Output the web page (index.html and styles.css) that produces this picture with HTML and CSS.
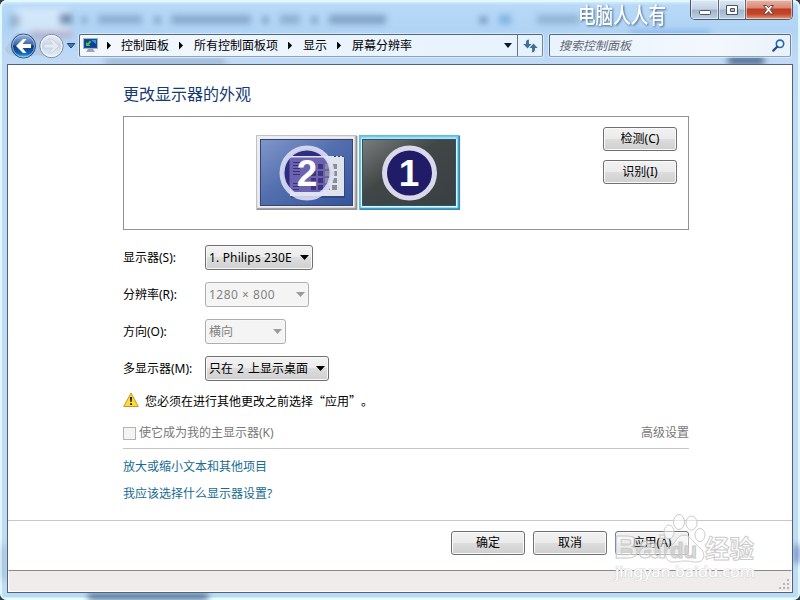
FILE: index.html
```html
<!DOCTYPE html>
<html lang="zh-CN">
<head>
    <meta charset="UTF-8">
    <meta name="viewport" content="width=device-width, initial-scale=1.0">
    <title>屏幕分辨率</title>
    <link rel="stylesheet" href="styles.css">
</head>
<body>

<div class="window">
    <!-- Aero glass: blurred shapes behind the frame -->
    <svg class="glass" width="800" height="600" viewBox="0 0 800 600">
        <rect x="15" y="8" width="55" height="24" fill="#fff" opacity=".4"/>
        <g fill="#17365f">
            <rect x="10" y="15" width="10" height="12" opacity=".25"/>
            <rect x="60" y="14" width="12" height="10" opacity=".5"/>
            <rect x="82" y="17" width="5" height="6" opacity=".4"/>
            <rect x="98" y="15" width="44" height="9" opacity=".25"/>
            <rect x="155" y="17" width="5" height="6" opacity=".5"/>
            <rect x="171" y="15" width="80" height="9" opacity=".28"/>
            <rect x="263" y="17" width="5" height="6" opacity=".5"/>
            <rect x="280" y="15" width="20" height="9" opacity=".25"/>
            <rect x="312" y="17" width="5" height="6" opacity=".5"/>
            <rect x="329" y="15" width="57" height="9" opacity=".33"/>
            <rect x="480" y="17" width="7" height="6" opacity=".5"/>
            <rect x="499" y="15" width="12" height="9" fill="#2a78b8" opacity=".4"/>
            <rect x="537" y="15" width="42" height="9" opacity=".22"/>
            <rect x="105" y="60" width="120" height="4" opacity=".35"/>
            <rect x="630" y="30" width="80" height="8" fill="#3f8be0" opacity=".35"/>
            <rect x="728" y="56" width="36" height="9" opacity=".65"/>
            <rect x="88" y="594" width="120" height="9" opacity=".75"/>
            <rect x="794" y="545" width="6" height="18" fill="#3a50a0" opacity=".6"/>
            <rect x="1" y="545" width="5" height="35" opacity=".2"/>
        </g>
        <rect x="30" y="31" width="42" height="7" fill="#b46a80" opacity=".35"/>
    </svg>

    <div class="caption">
        <svg class="channel" width="92" height="29" viewBox="0 0 92 29">
            <text x="1" y="23" textLength="88" lengthAdjust="spacingAndGlyphs">电脑人人有</text>
        </svg>
        <div class="controls">
            <span class="ctl min"><svg width="27" height="19"><rect x="8.500" y="10.500" width="11" height="4" rx="1" fill="#fff" stroke="#4a5666"/></svg></span>
            <span class="ctl max"><svg width="26" height="19"><path d="M7.500 5.500h11v9h-11zM11.500 8.500v3h4v-3z" fill="#fff" fill-rule="evenodd" stroke="#4a5666"/></svg></span>
            <span class="ctl close"><svg width="46" height="19"><path d="M17.500 5.500h3l2 2.200 2-2.200h3l-3.300 4 3.300 4.500h-3l-2-2.500-2 2.500h-3l3.300-4.500z" fill="#fff" stroke="#64404a"/></svg></span>
        </div>
    </div>

    <div class="navbar">
        <svg class="travel" width="66" height="32" viewBox="0 0 66 32">
            <defs>
                <linearGradient id="back" x1="0" y1="0" x2="0" y2="1">
                    <stop offset="0" stop-color="#a5bde0"/>
                    <stop offset=".45" stop-color="#3465ab"/>
                    <stop offset=".5" stop-color="#0c3a80"/>
                    <stop offset=".8" stop-color="#1261b0"/>
                    <stop offset="1" stop-color="#53d2f7"/>
                </linearGradient>
                <linearGradient id="fwd" x1="0" y1="0" x2="0" y2="1">
                    <stop offset="0" stop-color="#e8eef7"/>
                    <stop offset=".5" stop-color="#c9d6e6"/>
                    <stop offset="1" stop-color="#e9f2fb"/>
                </linearGradient>
            </defs>
            <path d="M16 4c12 0 10 3 21 2 7-1 15-1 18 2v16c-4 5-10 4-17 2-10 3-30 4-33-6z" fill="#a9bad4" opacity=".45"/>
            <circle cx="23.500" cy="17" r="12" fill="url(#back)" stroke="#314e7c"/>
            <circle cx="23.500" cy="17" r="11" fill="none" stroke="#c8d9ef" stroke-opacity=".65"/>
            <path d="M16 17l7-7h3.500l-4 5H31v4h-8.500l4 5H23z" fill="#fff"/>
            <circle cx="51.500" cy="17" r="11.700" fill="url(#fwd)" stroke="#7c8ca4"/>
            <circle cx="51.500" cy="17" r="10.500" fill="none" stroke="#f4f8fc"/>
            <path d="M59 17l-7-7h-3.500l4 5H44v4h8.500l-4 5H52z" fill="#e4eaf2" stroke="#c1ccdb" stroke-width=".7"/>
        </svg>
        <svg class="history" width="10" height="32"><path d="M1.300 14.500h7.500l-3.800 4.500z" fill="#3e7dbb" stroke="#24456e"/></svg>
        <div class="address">
            <svg class="place" width="16" height="16" viewBox="0 0 16 16">
                <rect x=".5" y="1.500" width="14" height="10" fill="#174c9b" stroke="#a9b3c4"/>
                <rect x="2" y="3" width="11" height="7" fill="#123e91"/>
                <path d="M8 3h5v4z" fill="#2d9adf"/>
                <path d="M3 9V5l1.500 1.300L7 3.500 8.300 5 6 7.500 7.500 9z" fill="#45c653"/>
                <path d="M5 12h5l2 3H3z" fill="#9ba5b8"/>
            </svg>
            <span class="sep"></span><span class="crumb">控制面板</span>
            <span class="sep"></span><span class="crumb">所有控制面板项</span>
            <span class="sep"></span><span class="crumb">显示</span>
            <span class="sep"></span><span class="crumb">屏幕分辨率</span>
            <span class="arrow"></span>
            <span class="refresh">
                <svg width="15" height="14" viewBox="0 0 15 14"><path d="M6.500 .500C2.500 .500 3 3.500 3 5H.300l4.200 4.500L8.500 5H6C6 3 5.500 1.500 6.500 .500zM8.500 13.500c4 0 3.500-3 3.500-4.500h2.700L10.500 4.500 6.500 9H9c0 2 .5 3.500-.5 4.500z" fill="#3f7098"/></svg>
            </span>
        </div>
        <div class="search">
            <span>搜索控制面板</span>
            <svg width="13" height="13" viewBox="0 0 13 13"><circle cx="8" cy="4.800" r="3.700" fill="#e9f7ff" stroke="#2a62ae" stroke-width="1.600"/><path d="M5.200 7.700L1.300 11.600" stroke="#254a86" stroke-width="2.200" stroke-linecap="round"/></svg>
        </div>
    </div>

    <div class="client">
        <div class="page">
            <h1>更改显示器的外观</h1>

            <div class="preview">
                <svg class="monitors" width="206" height="78" viewBox="0 0 206 78">
                    <defs>
                        <linearGradient id="screen2" x1="0" y1="0" x2="1" y2="1">
                            <stop offset="0" stop-color="#8197cb"/>
                            <stop offset=".45" stop-color="#536fae"/>
                            <stop offset="1" stop-color="#36549a"/>
                        </linearGradient>
                        <linearGradient id="screen1" x1="0" y1="0" x2="1" y2="1">
                            <stop offset="0" stop-color="#7a7d7e"/>
                            <stop offset=".42" stop-color="#414647"/>
                            <stop offset="1" stop-color="#3a4042"/>
                        </linearGradient>
                        <linearGradient id="bezel" x1="0" y1="0" x2="1" y2="1">
                            <stop offset="0" stop-color="#f0f0f2"/>
                            <stop offset="1" stop-color="#b8b8bc"/>
                        </linearGradient>
                    </defs>
                    <!-- monitor 2 -->
                    <rect x="1" y="1" width="101" height="75" fill="url(#bezel)"/>
                    <path d="M1.500 76V1.500H101" fill="none" stroke="#c2c2c5"/>
                    <path d="M2 75.200h99.500V2" fill="none" stroke="#939397" stroke-width="1.800"/>
                    <rect x="3.500" y="3.500" width="95" height="69" fill="none" stroke="#eeeef2" stroke-width="2"/>
                    <rect x="5.500" y="5.500" width="92" height="66" fill="url(#screen2)" stroke="#36456f"/>
                    <rect x="36" y="24" width="54" height="40" fill="#263a70" opacity=".6"/>
                    <circle cx="52" cy="39" r="24" fill="#211b70" opacity=".8"/>
                    <rect x="35" y="22" width="54" height="40" fill="#e0e3ed"/>
                    <path d="M79 22.500h2m2 0h2m2 0h2" stroke="#334572"/>
                    <path d="M34.500 23.500H70a23 23 0 0 1-3 34.500H38a23 23 0 0 1-3.500-4.500z" fill="#6c62b0"/>
                    <path d="M38 28.500h7m-7 3h7m-7 3h7m-7 3h7m-7 3h7m-7 9h6m-6 3h6m-6 3h6" stroke="#38306f"/>
                    <path d="M56 30h5v5h-5zm7 0h5v5h-5zM56 37h5v5h-5zm7 0h5v5h-5zM56 44h5v5h-5zm7 0h5v5h-5zM56 51h5v5h-5zm7 0h5v5h-5z" fill="#3c3580"/>
                    <path d="M70 30h5v5h-5zm7 0h5v5h-5zM70 37h5v5h-5zm7 0h5v5h-5zM70 44h5v5h-5zm7 0h5v5h-5zM70 51h5v5h-5zm7 0h5v5h-5z" fill="#8b8d98"/>
                    <circle cx="52" cy="39" r="25" fill="none" stroke="#dfe1f7" stroke-width="5" stroke-opacity=".88"/>
                    <text class="num" x="52" y="52">2</text>
                    <!-- monitor 1 (selected) -->
                    <rect x="104" y="1" width="101" height="75" fill="#83d3f4"/>
                    <path d="M104.800 76V1.800H204" fill="none" stroke="#65b9dd" stroke-width="1.600"/>
                    <path d="M105 75.200h99.200V2" fill="none" stroke="#3589b5" stroke-width="1.800"/>
                    <path d="M107 5v68m0-.700h94V5" fill="none" stroke="#d9f7ff" stroke-width="2"/>
                    <path d="M106 4.500h95" stroke="#a6e6fc" stroke-width="2"/>
                    <rect x="107.500" y="5.500" width="93" height="66" fill="url(#screen1)" stroke="#315362"/>
                    <circle cx="154.500" cy="39" r="25" fill="#211c68" stroke="#dad9ea" stroke-width="5"/>
                    <text class="num" x="154" y="52">1</text>
                </svg>
                <div class="side">
                    <button type="button">检测(C)</button>
                    <button type="button">识别(I)</button>
                </div>
            </div>

            <div class="row"><label>显示器(S):</label><div class="combo w108"><span class="model">1. Philips 230E</span></div></div>
            <div class="row"><label>分辨率(R):</label><div class="combo w104 off"><span class="size">1280 × 800</span></div></div>
            <div class="row"><label>方向(O):</label><div class="combo w81 off"><span>横向</span></div></div>
            <div class="row"><label>多显示器(M):</label><div class="combo w124"><span class="mode">只在 2 上显示桌面</span></div></div>

            <div class="notice">
                <svg width="16" height="16" viewBox="0 0 16 16"><path d="M8 1L15.300 14.500H.700z" fill="#ffd83a" stroke="#c79a1c" stroke-linejoin="round"/><path d="M7 5h2l-.4 5H7.400zM7.200 11.200h1.700v1.700H7.200z" fill="#111"/></svg>
                <span>您必须在进行其他更改之前选择“应用”。</span>
            </div>

            <div class="primary">
                <span class="check"></span><span>使它成为我的主显示器(K)</span>
                <span class="advanced">高级设置</span>
            </div>

            <a class="link">放大或缩小文本和其他项目</a>
            <a class="link">我应该选择什么显示器设置?</a>
        </div>

        <div class="actions">
            <button type="button">确定</button>
            <button type="button">取消</button>
            <button type="button">应用(A)</button>
        </div>
        <div class="status">
            <svg width="12" height="12"><path d="M8 1h2v2H8zM4 5h2v2H4zM8 5h2v2H8zM0 9h2v2H0zM4 9h2v2H4zM8 9h2v2H8z" fill="#b9b6b8"/></svg>
        </div>
    </div>

    <svg class="watermark" width="150" height="76" viewBox="0 0 150 76">
        <g fill="#fff" fill-opacity=".5" stroke="#cbcbcb" stroke-width="1">
            <ellipse cx="68" cy="12" rx="5.500" ry="7.500"/>
            <ellipse cx="80.500" cy="13" rx="5.500" ry="7"/>
            <ellipse cx="58" cy="22" rx="5" ry="7"/>
            <ellipse cx="89" cy="25" rx="5" ry="6.500"/>
            <path d="M73 25c-7 0-8 8-14 12-7 5-5 15 3 15 6 0 7-1 12-1s6 1 12 1c8 0 9-9 3-14-7-5-9-13-16-13z"/>
            <text class="logo" x="3" y="48" textLength="53" lengthAdjust="spacingAndGlyphs">Bai</text>
            <text class="logo-du" x="59" y="48" textLength="27" lengthAdjust="spacingAndGlyphs">du</text>
            <text class="logo-cn" x="94" y="48" textLength="49" lengthAdjust="spacingAndGlyphs">经验</text>
        </g>
        <text class="site" x="4" y="67" textLength="140" lengthAdjust="spacingAndGlyphs">jingyan.baidu.com</text>
    </svg>
</div>

</body>
</html>
```
FILE: styles.css
```css
* {
    box-sizing: border-box;
}

body {
    margin: 0;
    background: #333b48;
    font-family: "Noto Sans", "Noto Sans CJK SC", sans-serif;
    font-size: 12px;
    line-height: 16px;
    color: #000;
}

svg {
    display: block;
    flex: none;
}

.window {
    position: relative;
    display: flex;
    flex-direction: column;
    width: 800px;
    height: 600px;
    padding: 0 7px 7px;
    overflow: hidden;
    border-radius: 7px;
    background: linear-gradient(#e5f8ff 0, #b8d9f7 5px, #b1d4f5 30px, #c0daf5 62px, #c0dcf4 590px, #b8dbf4 597px, #e8ffff 598px);
    box-shadow: inset 2px 0 #e2f8ff, inset -2px 0 #e2f8ff, inset 0 2px #e2f8ff;
}

.glass {
    position: absolute;
    left: 0;
    top: 0;
    filter: blur(3px);
}

/* caption */
.caption {
    position: relative;
    display: flex;
    justify-content: flex-end;
    height: 29px;
}

.channel {
    margin-right: 21px;
    overflow: visible;
}

.channel text {
    font-family: "Noto Sans CJK SC", sans-serif;
    font-size: 22px;
    font-weight: 500;
    fill: #fff;
    filter: drop-shadow(1px 1px 1px #46688c);
}

.controls {
    display: flex;
    height: 20px;
    border: 1px solid #4b5a6c;
    border-top: 0;
    border-radius: 0 0 5px 5px;
    overflow: hidden;
}

.ctl {
    background: linear-gradient(#dce7f3 0, #c3d3e5 9px, #9fb4cb 10px, #bdd1e5 19px);
    box-shadow: inset 0 0 0 1px rgba(255, 255, 255, .5);
}

.max {
    border-left: 1px solid #5b6a7d;
    border-right: 1px solid #5b6a7d;
}

.close {
    background: linear-gradient(#e7b4a6 0, #d78875 8px, #bd3c20 9px, #c4472a 14px, #e39876 19px);
}

/* navigation */
.navbar {
    position: relative;
    display: flex;
    height: 35px;
}

.travel {
    margin-left: -7px;
}

.address {
    display: flex;
    align-items: center;
    width: 464px;
    height: 23px;
    margin: 5px 0 0 3px;
    border: 1px solid #52677e;
    border-color: #52677e #73869b #8fa4ba #52677e;
    border-radius: 2px;
    background: linear-gradient(90deg, #f3f8fd, #eaf4fe 60%, #e6f2fd);
    box-shadow: 0 0 0 1px rgba(235, 247, 255, .6);
}

.place {
    margin: 0 0 1px 3px;
}

.sep {
    width: 5px;
    height: 8px;
    margin: 0 10px;
    background: #000;
    clip-path: polygon(0 0, 80% 50%, 0 100%);
}

.place + .sep {
    margin-left: 8px;
    margin-right: 9px;
}

.arrow {
    width: 8px;
    height: 5px;
    margin: 0 5px 0 auto;
    background: #101820;
    clip-path: polygon(0 0, 100% 0, 50% 100%);
}

.refresh {
    display: flex;
    align-items: center;
    justify-content: center;
    width: 25px;
    height: 21px;
    border-left: 1px solid #62768b;
}

.search {
    display: flex;
    align-items: center;
    justify-content: space-between;
    width: 242px;
    height: 23px;
    margin: 5px 0 0 6px;
    padding: 0 5px 0 9px;
    border: 1px solid #52677e;
    border-color: #52677e #73869b #8fa4ba #52677e;
    border-radius: 2px;
    background: linear-gradient(90deg, #e8f3fe, #f3f8fd 70%, #e9f1fa);
    box-shadow: 0 0 0 1px rgba(235, 247, 255, .6);
    color: #61666d;
    font-style: italic;
}

/* client area */
.client {
    position: relative;
    display: flex;
    flex-direction: column;
    width: 786px;
    height: 529px;
    border: 1px solid #4f6478;
    background: #fff;
}

.page {
    height: 455px;
    padding: 17px 103px 0 115px;
}

h1 {
    margin: 0 0 10px;
    font-size: 16px;
    font-weight: normal;
    line-height: 24px;
    color: #153a72;
}

.preview {
    display: flex;
    height: 114px;
    margin-bottom: 15px;
    padding: 10px 11px 0 131px;
    border: 1px solid #929292;
}

.monitors {
    margin-top: 7px;
}

.num {
    font: bold 37px "Liberation Sans", sans-serif;
    text-anchor: middle;
    fill: #fff;
}

.side {
    display: flex;
    flex-direction: column;
    gap: 9px;
    margin-left: auto;
}

button {
    width: 74px;
    height: 24px;
    padding: 0;
    border: 1px solid #707070;
    border-radius: 3px;
    background: linear-gradient(#f2f2f2 0, #ebebeb 49%, #dddddd 50%, #cfcfcf 100%);
    box-shadow: inset 0 0 0 1px #fafafa;
    font: inherit;
    color: #000;
}

.row {
    display: flex;
    height: 25px;
    margin-bottom: 12px;
    line-height: 25px;
}

.row label {
    width: 82px;
}

.combo {
    display: flex;
    align-items: center;
    justify-content: space-between;
    height: 25px;
    padding: 0 3px;
    border: 1px solid #707070;
    border-radius: 3px;
    background: linear-gradient(#f3f3f3 0, #ebebeb 49%, #dddddd 50%, #d0d0d0 100%);
    box-shadow: inset 0 0 0 1px #f8f8f8;
    white-space: nowrap;
}

.combo::after {
    content: "";
    width: 9px;
    height: 5px;
    background: #000;
    clip-path: polygon(0 0, 100% 0, 50% 100%);
}

.off {
    border-color: #adadad;
    background: #f4f4f4;
    color: #838383;
}

.off::after {
    background: #9b9b9b;
}

.w108 { width: 108px; }
.w104 { width: 104px; }
.w81 { width: 81px; }
.w124 { width: 124px; }

.model {
    letter-spacing: .15px;
}

.size {
    letter-spacing: .5px;
}

.mode {
    word-spacing: 1px;
}

.notice {
    display: flex;
    align-items: center;
    gap: 6px;
    height: 16px;
    font-family: "Noto Sans CJK SC", sans-serif;
    text-spacing-trim: space-all;
}

.notice svg {
    margin-bottom: 2px;
}

.primary {
    display: flex;
    align-items: center;
    height: 32px;
    margin: 8px 0 10px;
    border-bottom: 1px solid #c5c5c5;
    color: #777;
}

.check {
    width: 13px;
    height: 13px;
    margin: 2px 3px 0 0;
    border: 1px solid #b3b3b3;
    background: #f5f4f5;
}

.advanced {
    margin-left: auto;
}

.link {
    display: block;
    margin-bottom: 11px;
    color: #176b94;
}

.actions {
    display: flex;
    justify-content: flex-end;
    gap: 8px;
    height: 50px;
    padding: 10px 103px 0 0;
    border-top: 1px solid #c7c9c8;
}

.status {
    display: flex;
    align-items: flex-end;
    justify-content: flex-end;
    height: 22px;
    padding: 0 0 1px;
    border: 1px solid #fff;
    border-top: 1px solid #888;
    background: #f0ecec;
}

/* site mark over the lower right corner */
.watermark {
    position: absolute;
    left: 611px;
    top: 510px;
}

.logo,
.logo-du {
    font: bold 31px "Liberation Sans", sans-serif;
}

.logo-du {
    font-size: 22px;
    fill: #bbb;
}

.logo-cn {
    font: bold 25px "Noto Sans CJK SC", sans-serif;
}

.site {
    font: 14px "Noto Sans", sans-serif;
    fill: #fff;
    stroke: #dadada;
    stroke-width: 1.2px;
    paint-order: stroke;
}
```
